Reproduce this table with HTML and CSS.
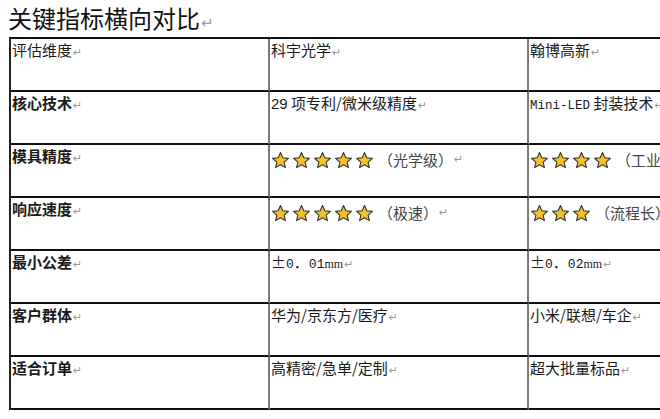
FILE: index.html
```html
<!DOCTYPE html>
<html lang="zh">
<head>
<meta charset="utf-8">
<title>关键指标横向对比</title>
<link rel="stylesheet" href="styles.css">
</head>
<body>
<div class="page">
  <div class="title">关键指标横向对比<span class="pm">↵</span></div>
  <div class="grid">
    <div class="cell">评估维度<span class="pm">↵</span></div>
    <div class="cell">科宇光学<span class="pm">↵</span></div>
    <div class="cell">翰博高新<span class="pm">↵</span></div>

    <div class="cell bold">核心技术<span class="pm">↵</span></div>
    <div class="cell"><span class="lat">29</span> 项专利/微米级精度<span class="pm">↵</span></div>
    <div class="cell"><span class="mono">Mini-LED</span> 封装技术<span class="pm">↵</span></div>

    <div class="cell bold">模具精度<span class="pm">↵</span></div>
    <div class="cell"><span class="stars"><svg class="star" viewBox="0 0 24 24"><polygon points="12,2 14.9,8.6 22,9.3 16.6,14 18.2,21 12,17.3 5.8,21 7.4,14 2,9.3 9.1,8.6"/></svg><svg class="star" viewBox="0 0 24 24"><polygon points="12,2 14.9,8.6 22,9.3 16.6,14 18.2,21 12,17.3 5.8,21 7.4,14 2,9.3 9.1,8.6"/></svg><svg class="star" viewBox="0 0 24 24"><polygon points="12,2 14.9,8.6 22,9.3 16.6,14 18.2,21 12,17.3 5.8,21 7.4,14 2,9.3 9.1,8.6"/></svg><svg class="star" viewBox="0 0 24 24"><polygon points="12,2 14.9,8.6 22,9.3 16.6,14 18.2,21 12,17.3 5.8,21 7.4,14 2,9.3 9.1,8.6"/></svg><svg class="star" viewBox="0 0 24 24"><polygon points="12,2 14.9,8.6 22,9.3 16.6,14 18.2,21 12,17.3 5.8,21 7.4,14 2,9.3 9.1,8.6"/></svg></span><span class="note">（光学级）</span><span class="pm">↵</span></div>
    <div class="cell"><span class="stars"><svg class="star" viewBox="0 0 24 24"><polygon points="12,2 14.9,8.6 22,9.3 16.6,14 18.2,21 12,17.3 5.8,21 7.4,14 2,9.3 9.1,8.6"/></svg><svg class="star" viewBox="0 0 24 24"><polygon points="12,2 14.9,8.6 22,9.3 16.6,14 18.2,21 12,17.3 5.8,21 7.4,14 2,9.3 9.1,8.6"/></svg><svg class="star" viewBox="0 0 24 24"><polygon points="12,2 14.9,8.6 22,9.3 16.6,14 18.2,21 12,17.3 5.8,21 7.4,14 2,9.3 9.1,8.6"/></svg><svg class="star" viewBox="0 0 24 24"><polygon points="12,2 14.9,8.6 22,9.3 16.6,14 18.2,21 12,17.3 5.8,21 7.4,14 2,9.3 9.1,8.6"/></svg></span><span class="note">（工业级）</span><span class="pm">↵</span></div>

    <div class="cell bold">响应速度<span class="pm">↵</span></div>
    <div class="cell"><span class="stars"><svg class="star" viewBox="0 0 24 24"><polygon points="12,2 14.9,8.6 22,9.3 16.6,14 18.2,21 12,17.3 5.8,21 7.4,14 2,9.3 9.1,8.6"/></svg><svg class="star" viewBox="0 0 24 24"><polygon points="12,2 14.9,8.6 22,9.3 16.6,14 18.2,21 12,17.3 5.8,21 7.4,14 2,9.3 9.1,8.6"/></svg><svg class="star" viewBox="0 0 24 24"><polygon points="12,2 14.9,8.6 22,9.3 16.6,14 18.2,21 12,17.3 5.8,21 7.4,14 2,9.3 9.1,8.6"/></svg><svg class="star" viewBox="0 0 24 24"><polygon points="12,2 14.9,8.6 22,9.3 16.6,14 18.2,21 12,17.3 5.8,21 7.4,14 2,9.3 9.1,8.6"/></svg><svg class="star" viewBox="0 0 24 24"><polygon points="12,2 14.9,8.6 22,9.3 16.6,14 18.2,21 12,17.3 5.8,21 7.4,14 2,9.3 9.1,8.6"/></svg></span><span class="note">（极速）</span><span class="pm">↵</span></div>
    <div class="cell"><span class="stars"><svg class="star" viewBox="0 0 24 24"><polygon points="12,2 14.9,8.6 22,9.3 16.6,14 18.2,21 12,17.3 5.8,21 7.4,14 2,9.3 9.1,8.6"/></svg><svg class="star" viewBox="0 0 24 24"><polygon points="12,2 14.9,8.6 22,9.3 16.6,14 18.2,21 12,17.3 5.8,21 7.4,14 2,9.3 9.1,8.6"/></svg><svg class="star" viewBox="0 0 24 24"><polygon points="12,2 14.9,8.6 22,9.3 16.6,14 18.2,21 12,17.3 5.8,21 7.4,14 2,9.3 9.1,8.6"/></svg></span><span class="note">（流程长）</span><span class="pm">↵</span></div>

    <div class="cell bold">最小公差<span class="pm">↵</span></div>
    <div class="cell">±<span class="digit">0</span>．<span class="digit">01</span><span class="unit">mm</span><span class="pm">↵</span></div>
    <div class="cell">±<span class="digit">0</span>．<span class="digit">02</span><span class="unit">mm</span><span class="pm">↵</span></div>

    <div class="cell bold">客户群体<span class="pm">↵</span></div>
    <div class="cell">华为/京东方/医疗<span class="pm">↵</span></div>
    <div class="cell">小米/联想/车企<span class="pm">↵</span></div>

    <div class="cell bold">适合订单<span class="pm">↵</span></div>
    <div class="cell">高精密/急单/定制<span class="pm">↵</span></div>
    <div class="cell">超大批量标品<span class="pm">↵</span></div>
  </div>
</div>
</body>
</html>
```

FILE: styles.css
```css
html, body {
  margin: 0;
  padding: 0;
  background: #ffffff;
  overflow: hidden;
}
body {
  width: 660px;
  height: 419px;
  font-family: "Noto Sans CJK SC", "Noto Sans", sans-serif;
  color: #1a1a1a;
}
.page {
  width: 820px;
}
.title {
  height: 37px;
  padding-left: 8px;
  font-size: 24px;
  line-height: 36px;
  color: #111;
}
.pm {
  color: #9a9a9a;
  font-family: "DejaVu Sans", sans-serif;
  font-weight: 400;
  font-size: 11px;
  margin-left: 1px;
}
.title .pm {
  font-size: 15px;
}
.grid {
  margin-left: 9px;
  display: grid;
  grid-template-columns: 259px 259px 259px;
  grid-auto-rows: 53px;
  border-top: 2px solid #111;
  border-left: 2px solid #222;
}
.cell {
  box-sizing: border-box;
  border-bottom: 2px solid #111;
  border-right: 2px solid #7a7a7a;
  padding: 1px 2px 0 1px;
  font-size: 15px;
  line-height: 20px;
  white-space: nowrap;
  overflow: visible;
}
.bold {
  font-weight: 700;
}
.lat {
  font-family: "Liberation Sans", sans-serif;
}
.mono {
  font-family: "Liberation Mono", monospace;
  font-size: 12.5px;
}
.digit {
  font-family: "Liberation Mono", monospace;
  font-size: 13px;
}
.unit {
  font-family: "Liberation Serif", serif;
  font-size: 12px;
}
.stars {
  display: inline-flex;
  gap: 2px;
  vertical-align: top;
  padding-top: 5px;
}
.star {
  width: 19px;
  height: 19px;
}
.star polygon {
  fill: #f6c02c;
  stroke: #333;
  stroke-width: 1.4;
  stroke-linejoin: round;
}
.note {
  display: inline-block;
  vertical-align: top;
  color: #444;
  padding-top: 4px;
  margin-left: 4px;
}
.stars + .note + .pm {
  display: inline-block;
  vertical-align: top;
  padding-top: 4px;
}
```
